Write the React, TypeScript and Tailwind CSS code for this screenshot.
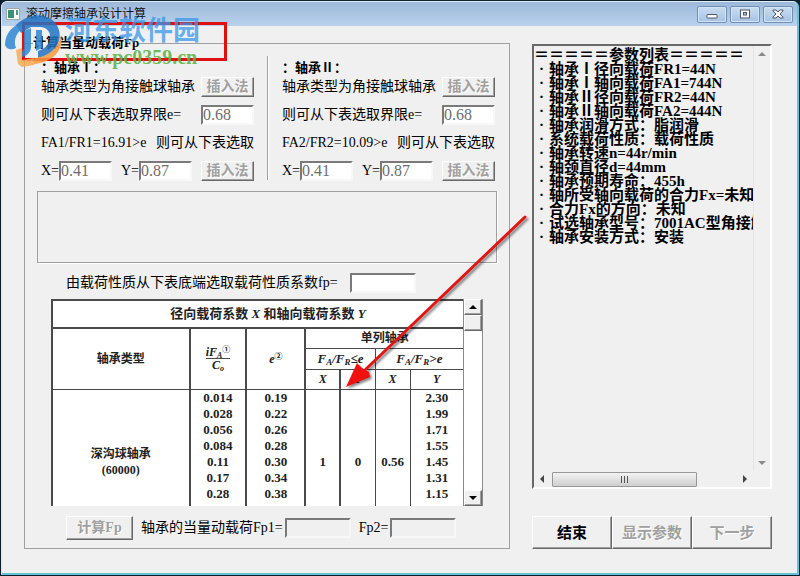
import { useState, type ReactNode } from "react";
import clsx from "clsx";

const bearings = [
  { id: 1, name: "：轴承Ⅰ：", ratio: "FA1/FR1=16.91>e", e: "0.68", x: "0.41", y: "0.87" },
  { id: 2, name: "：轴承Ⅱ：", ratio: "FA2/FR2=10.09>e", e: "0.68", x: "0.41", y: "0.87" },
];

const params = [
  "轴承Ⅰ径向载荷FR1=44N",
  "轴承Ⅰ轴向载荷FA1=744N",
  "轴承Ⅱ径向载荷FR2=44N",
  "轴承Ⅱ轴向载荷FA2=444N",
  "轴承润滑方式：脂润滑",
  "系统载荷性质：载荷性质",
  "轴承转速n=44r/min",
  "轴颈直径d=44mm",
  "轴承预期寿命：455h",
  "轴所受轴向载荷的合力Fx=未知",
  "合力Fx的方向：未知",
  "试选轴承型号：7001AC型角接触",
  "轴承安装方式：安装",
];

const rows = [
  ["0.014", "0.19", "", "", "", "2.30"],
  ["0.028", "0.22", "", "", "", "1.99"],
  ["0.056", "0.26", "", "", "", "1.71"],
  ["0.084", "0.28", "", "", "", "1.55"],
  ["0.11", "0.30", "1", "0", "0.56", "1.45"],
  ["0.17", "0.34", "", "", "", "1.31"],
  ["0.28", "0.38", "", "", "", "1.15"],
];

const raised =
  "border border-t-white border-l-white border-r-[#696969] border-b-[#696969] shadow-[inset_-1px_-1px_0_#a0a0a0] bg-[#f0f0f0]";
const sunken =
  "border-2 border-t-[#7a7a7a] border-l-[#7a7a7a] border-r-[#f8f8f8] border-b-[#f8f8f8]";

function PushButton({
  children,
  disabled,
  className,
}: {
  children: ReactNode;
  disabled?: boolean;
  className?: string;
}) {
  return (
    <button
      type="button"
      disabled={disabled}
      className={clsx(
        raised,
        "flex shrink-0 items-center justify-center whitespace-nowrap font-bold",
        disabled && "text-[#a0a0a0] [text-shadow:1px_1px_0_#fff]",
        className
      )}
    >
      {children}
    </button>
  );
}

function Field({ id, label, value }: { id: string; label: string; value: string }) {
  return (
    <div className="flex items-center">
      <label htmlFor={id}>{label}</label>
      <input
        id={id}
        defaultValue={value}
        disabled
        className={clsx(sunken, "h-5 w-[53px] bg-white text-[16px] text-[#6d6d6d]")}
      />
    </div>
  );
}

function Bearing({ data }: { data: (typeof bearings)[number] }) {
  return (
    <section className="min-w-0 whitespace-nowrap">
      <h2 className="mt-1 mb-px h-4 text-[13px] leading-4 font-bold">{data.name}</h2>
      <div className="flex flex-col gap-2">
        <div className="flex h-5 items-center justify-between">
          <span>轴承类型为角接触球轴承</span>
          <PushButton disabled className="h-5 w-[53px]">插入法</PushButton>
        </div>
        <div className="flex h-5 items-center justify-between">
          <label htmlFor={`e${data.id}`}>则可从下表选取界限e=</label>
          <input
            id={`e${data.id}`}
            defaultValue={data.e}
            disabled
            className={clsx(sunken, "h-5 w-[53px] bg-white text-[16px] text-[#6d6d6d]")}
          />
        </div>
        <p className="flex h-5 items-center justify-between">
          <span>{data.ratio}</span>
          <span>则可从下表选取</span>
        </p>
        <div className="flex h-5 items-center justify-between">
          <Field id={`x${data.id}`} label="X=" value={data.x} />
          <Field id={`y${data.id}`} label="Y=" value={data.y} />
          <PushButton disabled className="h-5 w-[53px]">插入法</PushButton>
        </div>
      </div>
    </section>
  );
}

function Arrow({ dir, className }: { dir: "up" | "down" | "left" | "right"; className?: string }) {
  const points = {
    up: "0,6 4,2 8,6",
    down: "0,2 8,2 4,6",
    left: "6,0 6,8 2,4",
    right: "2,0 6,4 2,8",
  };
  return (
    <svg viewBox="0 0 8 8" className={clsx("size-2", className)} aria-hidden="true">
      <polygon points={points[dir]} fill="currentColor" />
    </svg>
  );
}

// load factor table, scrolled to the top
function FactorTable() {
  const line = "border-[#4a4a4a]";
  return (
    <div className="mx-[14px] mt-[6px] flex h-[207px] overflow-hidden bg-white">
      <table
        className={clsx(
          line,
          "flex-1 table-fixed self-start border-collapse border-t-2 border-l-2 text-center text-[13px] leading-4 font-bold text-[#222]"
        )}
      >
        <colgroup>
          <col className="w-[138px]" />
          <col className="w-[57px]" />
          <col className="w-[59px]" />
          <col className="w-[35px]" />
          <col className="w-[35px]" />
          <col className="w-[35px]" />
          <col className="w-[53px]" />
        </colgroup>
        <thead>
          <tr className="h-7">
            <th colSpan={7} className={clsx(line, "border-b-2 pl-5")}>
              径向载荷系数 <i>X</i> 和轴向载荷系数 <i>Y</i>
            </th>
          </tr>
          <tr className="h-5 text-[12px] leading-3">
            <th rowSpan={3} className={clsx(line, "border-r-2 border-b")}>轴承类型</th>
            <th rowSpan={3} className={clsx(line, "border-r-2 border-b")}>
              <span className="inline-flex flex-col italic">
                <span className="border-b border-[#4a4a4a]">
                  iF<sub className="text-[8px]">A</sub>
                  <sup className="text-[8px] not-italic">①</sup>
                </span>
                <span>
                  C<sub className="text-[8px]">o</sub>
                </span>
              </span>
            </th>
            <th rowSpan={3} className={clsx(line, "border-r-2 border-b")}>
              <i>e</i>
              <sup className="text-[8px]">②</sup>
            </th>
            <th colSpan={4} className={clsx(line, "border-b")}>单列轴承</th>
          </tr>
          <tr className="h-[21px] text-[13px] leading-3 italic">
            <th colSpan={2} className={clsx(line, "border-r border-b")}>
              F<sub className="text-[9px]">A</sub>/F<sub className="text-[9px]">R</sub>≤e
            </th>
            <th colSpan={2} className={clsx(line, "border-b")}>
              F<sub className="text-[9px]">A</sub>/F<sub className="text-[9px]">R</sub>&gt;e
            </th>
          </tr>
          <tr className="h-5 text-[12px] italic">
            <th className={clsx(line, "border-r-2 border-b")}>X</th>
            <th className={clsx(line, "border-r border-b")}>Y</th>
            <th className={clsx(line, "border-r border-b")}>X</th>
            <th className={clsx(line, "border-b")}>Y</th>
          </tr>
        </thead>
        <tbody>
          {rows.map((row, r) => (
            <tr key={r} className="h-4 last:h-6 last:align-top">
              {r === 0 && (
                <th rowSpan={7} className={clsx(line, "border-r-2 pt-6 text-[12px]")}>
                  深沟球轴承
                  <br />
                  (60000)
                </th>
              )}
              {row.map((cell, c) => (
                <td
                  key={c}
                  className={clsx(line, c < 3 ? "border-r-2" : c < 5 && "border-r", "p-0")}
                >
                  {cell}
                </td>
              ))}
            </tr>
          ))}
        </tbody>
      </table>
      <div className="flex w-5 flex-col border-x border-[#8a8a8a] bg-white">
        <button type="button" aria-label="向上滚动" className={clsx(raised, "flex h-4 items-center justify-center")}>
          <Arrow dir="up" />
        </button>
        <div className={clsx(raised, "h-4")} />
        <button type="button" aria-label="向下滚动" className={clsx(raised, "mt-auto flex h-4 items-center justify-center")}>
          <Arrow dir="down" />
        </button>
      </div>
    </div>
  );
}

function TitleBar() {
  const box =
    "flex h-[17px] w-[30px] items-center justify-center rounded-[2px] border border-[#6f8fb4] bg-linear-to-b from-[#c9dcf1] to-[#a6c3e3] shadow-[inset_0_0_0_1px_#d5e4f5]";
  return (
    <header className="flex h-6 shrink-0 items-center bg-linear-to-b from-[#9db9da] to-[#b9d1ec] pr-1 pl-1">
      <svg viewBox="0 0 14 12" className="h-3 w-[14px]" aria-hidden="true">
        <rect x="0.5" y="0.5" width="13" height="11" fill="#fff" stroke="#9aa" />
        <rect x="2" y="2" width="6" height="8" fill="#3d8f76" />
        <rect x="10" y="2" width="2" height="5" fill="#4a9a80" />
      </svg>
      <h1 className="ml-[6px] text-[12px] text-[#111]">滚动摩擦轴承设计计算</h1>
      <div className="ml-auto flex gap-[3px]">
        <button type="button" aria-label="最小化" className={box}>
          <svg viewBox="0 0 12 10" className="h-[10px] w-3">
            <rect x="1" y="5.5" width="10" height="3.5" rx="0.5" fill="#fff" stroke="#535666" />
          </svg>
        </button>
        <button type="button" aria-label="最大化" className={box}>
          <svg viewBox="0 0 12 10" className="h-[10px] w-3">
            <rect x="1.5" y="1" width="9" height="8" fill="#f4f6fa" stroke="#535666" />
            <rect x="4.5" y="3.5" width="3" height="2.5" fill="#aac5e4" stroke="#535666" />
          </svg>
        </button>
        <button type="button" aria-label="关闭" className={box}>
          <svg viewBox="0 0 12 10" className="h-[10px] w-3">
            <path
              d="M1 1H4L6 3L8 1H11V2L8 5L11 8V9H8L6 7L4 9H1V8L4 5L1 2Z"
              fill="#f4f6fa"
              stroke="#535666"
            />
          </svg>
        </button>
      </div>
    </header>
  );
}

function ParamList() {
  return (
    <div className="flex min-h-0 flex-1 flex-col border-2 border-t-[#696969] border-r-white border-b-white border-l-[#696969]">
      <div className="flex min-h-0 flex-1">
        <div className="min-w-0 flex-1 overflow-hidden pt-[2px] text-[15px] leading-[14px] font-bold whitespace-nowrap">
          <h2 className="h-[14px]">＝＝＝＝＝参数列表＝＝＝＝＝</h2>
          <ul>
            {params.map((p) => (
              <li key={p} className="flex h-[14px]">
                <span className="w-[15px] shrink-0 text-center">·</span>
                {p}
              </li>
            ))}
          </ul>
        </div>
        <div className="flex w-[17px] flex-col items-center justify-between border-l border-[#e4e4e4] py-1 text-[#8a8a8a]">
          <Arrow dir="up" />
          <Arrow dir="down" />
        </div>
      </div>
      <div className="flex h-4 items-center pr-[17px] text-[#444]">
        <Arrow dir="left" className="mx-1" />
        <div className="ml-[2px] flex h-[15px] w-[145px] items-center justify-center gap-[2px] rounded-[1px] border border-[#979797] bg-linear-to-b from-[#f3f3f3] to-[#cfcfcf]">
          <span className="h-[7px] w-px bg-[#555]" />
          <span className="h-[7px] w-px bg-[#555]" />
          <span className="h-[7px] w-px bg-[#555]" />
        </div>
        <Arrow dir="right" className="mr-1 ml-auto" />
      </div>
    </div>
  );
}

function Watermark() {
  return (
    <div className="pointer-events-none absolute top-[14px] left-1">
      <svg viewBox="0 0 60 53" className="h-[53px] w-[60px] opacity-85" aria-hidden="true">
        {/* left crescent */}
        <path
          d="M20 8C8 11 1 20 1 31C3 36 8 36 12 34C9 26 12 17 24 11L26 6Z"
          fill="#2f86d6"
        />
        {/* roof and right ring */}
        <path
          d="M12 11C20 3 30 0 40 2C52 5 58 16 55 27C52 37 44 42 34 44V37C41 35 46 30 46 22C46 17 42 13 36 13H27L17 19Z"
          fill="#2374c4"
        />
        {/* stems */}
        <path d="M20 17L27 14V33C27 38 23 42 18 43V37C20 36 20 34 20 32Z" fill="#2f86d6" />
        <path d="M32 16H38V34L32 37Z" fill="#2f86d6" />
        {/* lower swoosh */}
        <path d="M57 21C60 34 51 46 36 49L23 52V46L32 44C45 42 54 34 57 21Z" fill="#f59a3c" />
        <path d="M12 36L18 34V46L30 44V51L18 53L14 50Z" fill="#f7ab55" />
      </svg>
      <div className="absolute top-[2px] left-[61px] whitespace-nowrap">
        <p className="h-[31px] text-[27px] leading-[31px] font-bold text-[#3a97e8]/75">河东软件园</p>
        <p className="h-5 text-[20px] leading-5 font-bold text-[#5db348]/90">www.pc0359.cn</p>
      </div>
    </div>
  );
}

export default function App() {
  const [fp, setFp] = useState("");

  return (
    <div className="relative flex min-h-screen flex-col bg-[#0d1e2c] p-px font-['Liberation_Serif','Noto_Sans_CJK_SC',serif] text-[14px] leading-5 text-black">
      <div className="flex flex-1 flex-col overflow-hidden rounded-t-md border-t border-r-2 border-b-2 border-l border-t-[#e2edf8] border-r-[#63c4d6] border-b-[#63c4d6] border-l-[#dde6ee] bg-[#f0f0f0]">
        <TitleBar />
        <main className="flex flex-1 gap-[22px] pt-[9px] pr-[25px] pb-6 pl-[22px]">
          <fieldset className="min-w-0 flex-1 border border-[#a0a0a0] px-3">
            <legend className="-ml-1 h-4 text-[13px] leading-4 font-bold whitespace-nowrap">
              计算当量动载荷Fp
            </legend>
            <div className="mt-[5px] grid grid-cols-[1fr_auto_1fr] gap-[13px] pr-[2px] pl-1">
              <Bearing data={bearings[0]} />
              <div className="mb-px border-r border-l border-r-white border-l-[#a0a0a0]" />
              <Bearing data={bearings[1]} />
            </div>
            <div className="mt-[10px] h-[72px] border border-[#a0a0a0] shadow-[1px_1px_0_#fff]" />
            <div className="mt-[10px] flex h-5 items-center gap-3 pl-[29px]">
              <label htmlFor="fp" className="whitespace-nowrap">
                由载荷性质从下表底端选取载荷性质系数fp=
              </label>
              <input
                id="fp"
                autoFocus
                value={fp}
                onChange={(e) => setFp(e.target.value)}
                className={clsx(sunken, "h-5 w-[66px] bg-white outline-none")}
              />
            </div>
            <FactorTable />
            <div className="mt-[10px] mb-1 flex h-6 items-center gap-2 pl-[29px] whitespace-nowrap">
              <PushButton disabled className="h-6 w-[67px]">计算Fp</PushButton>
              <div className="flex items-center gap-[2px]">
                <label htmlFor="fp1">轴承的当量动载荷Fp1=</label>
                <input id="fp1" readOnly className={clsx(sunken, "h-5 w-[66px]")} />
              </div>
              <div className="flex items-center gap-[2px]">
                <label htmlFor="fp2">Fp2=</label>
                <input id="fp2" readOnly className={clsx(sunken, "h-5 w-[66px]")} />
              </div>
            </div>
          </fieldset>
          <aside className="flex w-[240px] shrink-0 flex-col gap-[27px] pt-[9px]">
            <ParamList />
            <div className="grid grid-cols-3 text-[15px]">
              <PushButton className="h-[33px]">结束</PushButton>
              <PushButton disabled className="h-[33px]">显示参数</PushButton>
              <PushButton disabled className="h-[33px]">下一步</PushButton>
            </div>
          </aside>
        </main>
      </div>

      <div className="pointer-events-none absolute top-[22px] left-[22px] h-[39px] w-[205px] border-3 border-[#e01010]" />
      <Watermark />
      <svg
        viewBox="0 0 190 180"
        className="pointer-events-none absolute top-[214px] left-[342px] h-[180px] w-[190px] drop-shadow-[2px_2px_1px_rgba(0,0,0,0.45)]"
        aria-hidden="true"
      >
        <path d="M183 3L24 155" stroke="#e01515" strokeWidth="3" strokeLinecap="round" />
        <polygon points="4,173 15,149 20,154 27,158 28,163" fill="#f01010" />
      </svg>
    </div>
  );
}
